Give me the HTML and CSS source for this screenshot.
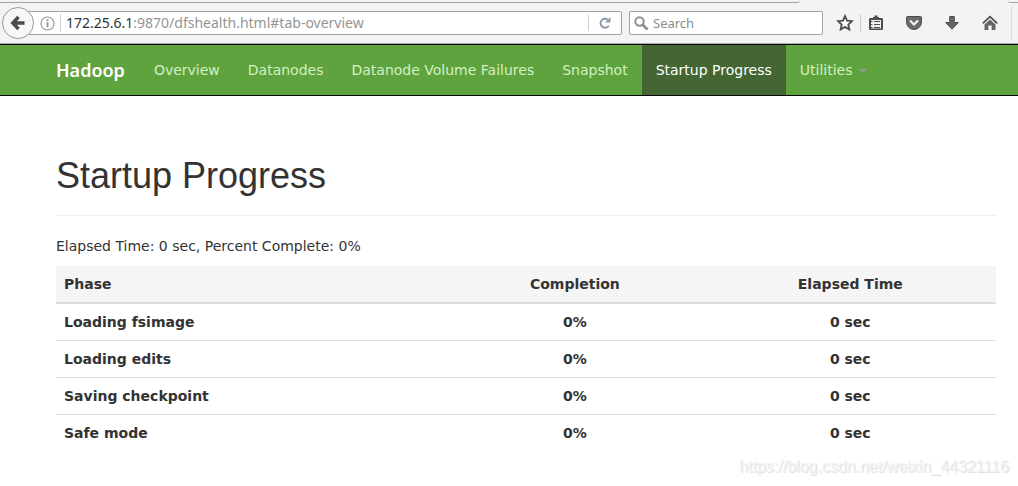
FILE: index.html
```html
<!DOCTYPE html>
<html lang="en">
<head>
<meta charset="utf-8">
<title>Namenode information</title>
<link rel="stylesheet" href="styles.css">
</head>
<body>
<div class="browser">
  <div class="tabstrip"><span class="tab-edge"></span><span class="tab-edge-next"></span></div>
  <div class="toolbar">
    <button class="back" aria-label="Back">
      <svg width="16" height="16" viewBox="0 0 16 16"><path d="M8.500 2 2.800 8l5.700 6M3 8h11.500" fill="none" stroke="#4c4c4c" stroke-width="3.400"/></svg>
    </button>
    <div class="address">
      <svg width="15" height="15" viewBox="0 0 15 15"><circle cx="7.500" cy="7.500" r="6.500" fill="none" stroke="#999" stroke-width="1.200"/><path d="M7.500 3.300v2M7.500 6.300v5" stroke="#999" stroke-width="2"/></svg>
      <div class="url" role="textbox" aria-label="Address"><span class="host">172.25.6.1</span>:9870/dfshealth.html#tab-overview</div>
      <button class="reload" aria-label="Reload">
        <svg width="12" height="12" viewBox="0 0 12 12"><path d="M9.800 8.700A4.500 4.500 0 1 1 8.800 2.600" fill="none" stroke="#8d9aa8" stroke-width="2"/><path d="M11.500 0v5.500H6z" fill="#8d9aa8"/></svg>
      </button>
    </div>
    <label class="search">
      <svg width="15" height="15" viewBox="0 0 15 15"><circle cx="5.500" cy="5.500" r="4.200" fill="none" stroke="#8e8e8e" stroke-width="2"/><path d="m8.500 8.500 5 5" stroke="#8e8e8e" stroke-width="2.600"/></svg>
      <input class="search-input" type="text" placeholder="Search" aria-label="Search">
    </label>
    <div class="actions">
      <button class="action star" aria-label="Bookmark">
        <svg width="18" height="18" viewBox="0 0 18 18"><path d="m9 2 2 4.600 5 .5-3.700 3.400 1 5L9 12.900l-4.300 2.600 1-5L2 7.100l5-.5z" fill="#fff" stroke="#4c4c4c" stroke-width="1.800"/></svg>
      </button>
      <button class="action list" aria-label="Bookmarks menu">
        <svg width="16" height="16" viewBox="0 0 16 16"><path d="M2 3h3V2h1.500V.5h3V2H11v1h3l1 1v10l-1 1H2l-1-1V4z" fill="#4c4c4c"/><path d="M3 5h10v8.500H3z" fill="#f3f3f3"/><path d="M3 6.500h1.500M6 6.500h6M3 9.500h1.500M6 9.500h6M3 12.500h1.500M6 12.500h6" stroke="#4c4c4c"/></svg>
      </button>
      <button class="action" aria-label="Pocket">
        <svg width="18" height="16" viewBox="0 0 18 16"><path d="M2.500 1.500h13q1 0 1 1v4.500a7.500 7.500 0 0 1-15 0V2.500q0-1 1-1z" fill="#6a6a6a" stroke="#4c4c4c"/><path d="m5 5.500 4 4 4-4" fill="none" stroke="#f3f3f3" stroke-width="2.200"/></svg>
      </button>
      <button class="action" aria-label="Downloads">
        <svg width="16" height="16" viewBox="0 0 16 16"><path d="M5.700 1.500h4.600v6h4L8 14.300 1.700 7.500h4z" fill="#656565" stroke="#4c4c4c"/></svg>
      </button>
      <button class="action" aria-label="Home">
        <svg width="16" height="16" viewBox="0 0 16 16"><path d="M8 4.500 13.500 9.500V15H9.700v-4.500H6.300V15H2.500V9.500z" fill="#656565"/><path d="M.8 8.400 8 1.700l7.200 6.700" fill="none" stroke="#4c4c4c" stroke-width="1.700"/></svg>
      </button>
    </div>
  </div>
</div>
<header class="navbar">
  <nav class="container nav">
    <a class="brand" href="#">Hadoop</a>
    <a class="nav-link" href="#tab-overview">Overview</a>
    <a class="nav-link" href="#tab-datanode">Datanodes</a>
    <a class="nav-link" href="#tab-datanode-volume-failures">Datanode Volume Failures</a>
    <a class="nav-link" href="#tab-snapshot">Snapshot</a>
    <a class="nav-link active" href="#tab-startup-progress">Startup Progress</a>
    <a class="nav-link" href="#utilities">Utilities<span class="caret"></span></a>
  </nav>
</header>
<main class="container">
  <h1 class="title">Startup Progress</h1>
  <p class="summary">Elapsed Time: 0 sec, Percent Complete: 0%</p>
  <table class="phases">
    <colgroup><col class="col-phase"><col class="col-completion"><col class="col-time"></colgroup>
    <thead><tr><th scope="col">Phase</th><th scope="col">Completion</th><th scope="col">Elapsed Time</th></tr></thead>
    <tbody>
      <tr><td>Loading fsimage</td><td>0%</td><td>0 sec</td></tr>
      <tr><td>Loading edits</td><td>0%</td><td>0 sec</td></tr>
      <tr><td>Saving checkpoint</td><td>0%</td><td>0 sec</td></tr>
      <tr><td>Safe mode</td><td>0%</td><td>0 sec</td></tr>
    </tbody>
  </table>
</main>
<footer class="watermark">https://blog.csdn.net/weixin_44321116</footer>
</body>
</html>
```
FILE: styles.css
```css
* { box-sizing: border-box; }

body {
  margin: 0;
  background: #fff;
  color: #333;
  font: 14px/20px "DejaVu Sans", sans-serif;
}

button { margin: 0; padding: 0; border: 0; background: none; }
svg { display: block; flex: none; }

.browser {
  background: #f3f3f3;
  border-bottom: 1px solid #aaadae;
  font: 13px/18px "Noto Sans", sans-serif;
}

.tabstrip { display: flex; justify-content: space-between; height: 3px; }
.tab-edge, .tab-edge-next { flex: none; border-bottom: 1px solid #a0a3a5; }
.tab-edge { width: 800px; border-radius: 0 0 12px 0; }
.tab-edge-next { width: 10px; border-radius: 0 0 0 10px; }

.toolbar { display: flex; align-items: center; height: 40px; padding: 0 6px 0 2px; }

.back {
  display: grid;
  place-items: center;
  flex: none;
  width: 32px;
  height: 32px;
  border: 1px solid #9b9b9b;
  border-radius: 50%;
  background: #f7f7f7;
  z-index: 1;
}

.address {
  display: flex;
  flex: 1;
  align-items: center;
  min-width: 0;
  height: 24px;
  margin-left: -8px;
  padding-left: 13px;
  border: 1px solid #a0a3a0;
  border-radius: 0 2px 2px 0;
  background: #fff;
}

.url {
  flex: 1;
  margin-left: 5px;
  padding-left: 5px;
  border-left: 1px solid #d0d0d0;
  color: #929595;
  font-size: 14px;
  white-space: nowrap;
  overflow: hidden;
}
.host { color: #2e3436; }

.reload {
  display: grid;
  place-items: center;
  width: 33px;
  height: 16px;
  border-left: 1px solid #d0d0d0;
}

.search {
  display: flex;
  align-items: center;
  gap: 4px;
  width: 194px;
  height: 24px;
  margin-left: 7px;
  padding: 0 4px;
  border: 1px solid #a0a3a0;
  border-radius: 2px;
  background: #fff;
}
.search-input { width: 100%; min-width: 0; padding: 0; border: 0; outline: 0; background: none; font: inherit; }
.search-input::placeholder { color: #8a8d8d; opacity: 1; }

.actions {
  display: flex;
  align-items: center;
  height: 36px;
  margin-left: 10px;
  padding-right: 2px;
  border-right: 1px solid #ddd;
}
.action { display: grid; place-items: center; width: 38px; height: 18px; }
.star { width: 28px; padding-right: 4px; border-right: 1px solid #ccc; }
.list { width: 34px; padding-right: 4px; }

.container { padding: 0 22px 0 56px; }

.navbar { background: #5fa33e; border: 1px solid #080808; border-width: 1px 0; }
.nav { display: flex; }
.brand {
  padding: 15px 15px 15px 0;
  color: #fff;
  font: 600 18px/20px "Noto Sans", sans-serif;
  text-decoration: none;
}
.nav-link {
  padding: 15px 14px;
  color: #d2f0c3;
  text-decoration: none;
  white-space: nowrap;
}
.active { background: #446633; color: #fff; }
.caret {
  display: inline-block;
  margin-left: 6px;
  vertical-align: middle;
  border: 4px solid transparent;
  border-top-color: #999;
  border-bottom: 0;
}

.title {
  margin: 60px 0 20px;
  padding-bottom: 19px;
  border-bottom: 1px solid #eee;
  font: 36px/40px "Liberation Sans", sans-serif;
}
.summary { margin: 0 0 10px; }

.phases { width: 100%; border-collapse: collapse; table-layout: fixed; font-weight: 700; }
.col-phase { width: 41.4%; }
.col-completion { width: 27.6%; }
.col-time { width: 31%; }
.phases th, .phases td { padding: 8px; text-align: center; }
.phases th:first-child, .phases td:first-child { text-align: left; }
.phases th { background: #f5f5f5; border-bottom: 2px solid #ddd; }
.phases td { border-top: 1px solid #ddd; }

.watermark {
  padding: 6px 9px 0;
  color: #f2f2f2;
  font: 16px/20px "Liberation Sans", sans-serif;
  text-align: right;
  text-shadow: 1px 1px 1px #ddd;
}
```
